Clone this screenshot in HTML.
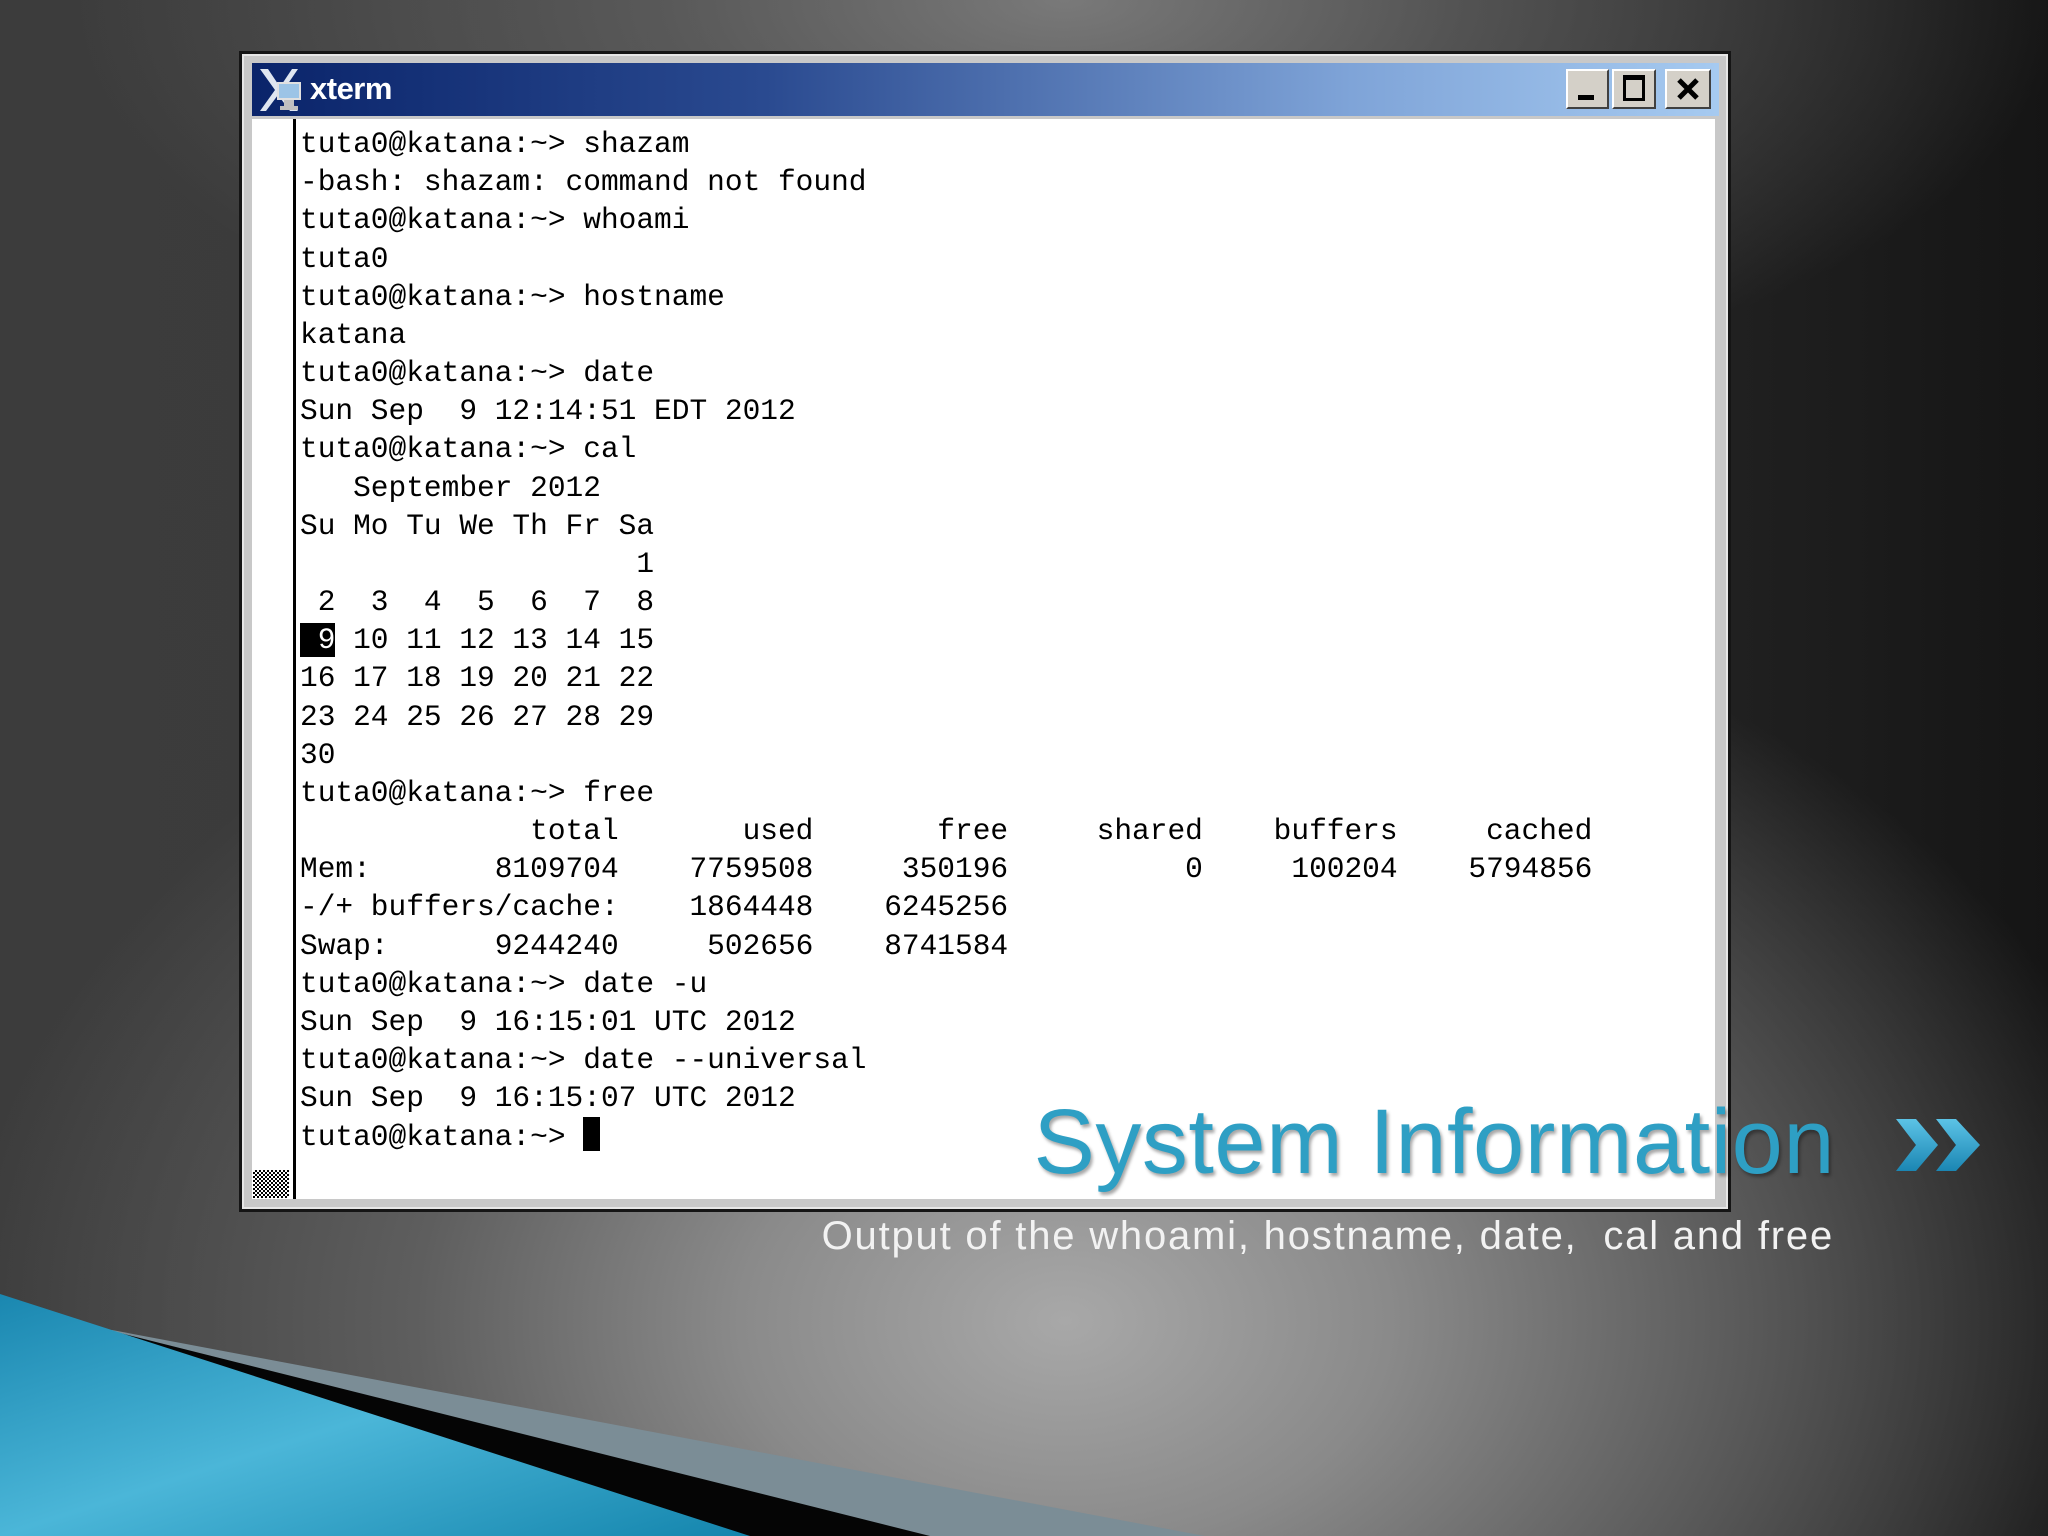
<!DOCTYPE html>
<html><head><meta charset="utf-8"><style>
*{margin:0;padding:0;box-sizing:border-box}
html,body{width:2048px;height:1536px;overflow:hidden}
body{position:relative;background:
radial-gradient(ellipse 1000px 420px at 52% 0%,rgba(125,125,125,.95) 0%,rgba(110,110,110,.6) 40%,rgba(80,80,80,0) 100%),
radial-gradient(ellipse 1300px 900px at 52% 86%,#a8a8a8 0%,#8a8a8a 25%,#5e5e5e 50%,rgba(60,60,60,0) 85%),
linear-gradient(90deg,#3c3c3c 0%,#3a3a3a 30%,#2e2e2e 65%,#151515 100%);font-family:"Liberation Sans",sans-serif}
#win{position:absolute;left:239px;top:51px;width:1492px;height:1161px;background:#c8c8c8;border:3px solid #151515;box-shadow:inset 0 0 0 2px #e6e6e6}
#tb{position:absolute;left:252px;top:63px;width:1467px;height:53px;background:linear-gradient(90deg,#0a246a 0%,#2a4a90 35%,#7fa4d8 75%,#a6caf0 100%)}
#tb .t{position:absolute;left:58px;top:8px;color:#fff;font-weight:bold;font-size:31px;letter-spacing:-0.5px}
.btn{position:absolute;top:6px;height:40px;background:#d4d0c8;border:2px solid;border-color:#fff #404040 #404040 #fff}
#cont{position:absolute;left:252px;top:119px;width:1463px;height:1080px;background:#fff}
#vl{position:absolute;left:293px;top:119px;width:3px;height:1080px;background:#000}
#chk{position:absolute;left:253px;top:1170px;width:36px;height:28px;background-image:repeating-conic-gradient(#000 0 25%,#fff 0 50%);background-size:4px 4px}
pre{position:absolute;left:300px;top:125px;font-family:"Liberation Mono",monospace;font-size:29.5px;line-height:38.17px;color:#000}
.inv{background:#000;color:#fff}
.cur{display:inline-block;width:17px;height:34px;background:#000;vertical-align:-6px}
#title{position:absolute;right:213px;top:1090px;font-size:92px;color:#2e9fc4;letter-spacing:0.5px;text-shadow:2px 3px 3px rgba(0,0,0,.35);white-space:nowrap}
#sub{position:absolute;right:214px;top:1214px;font-size:40px;color:#f2f2f2;letter-spacing:1.8px;white-space:nowrap}
</style></head><body>
<div id="win"></div>
<div id="tb">
<svg style="position:absolute;left:6px;top:4px" width="50" height="46" viewBox="0 0 50 46">
<path d="M2 2 L10 2 L22 20 L34 2 L40 2 L25 24 L40 44 L32 44 L20 28 L8 44 L2 44 L17 23 Z" fill="#dfe6f0"/>
<rect x="20" y="16" width="22" height="16" fill="#9cc4e6" stroke="#e0e0e0" stroke-width="2"/>
<rect x="26" y="33" width="10" height="6" fill="#c0c0c0"/><rect x="22" y="39" width="18" height="4" fill="#c0c0c0"/>
</svg>
<div class="t">xterm</div>
<div class="btn" style="left:1314px;width:43px"><div style="position:absolute;left:10px;top:24px;width:16px;height:5px;background:#000"></div></div>
<div class="btn" style="left:1360px;width:44px"><div style="position:absolute;left:9px;top:4px;width:22px;height:26px;border:3px solid #000;border-top-width:5px"></div></div>
<div class="btn" style="left:1413px;width:46px"><svg style="position:absolute;left:8px;top:5px" width="26" height="26" viewBox="0 0 26 26"><path d="M4 4 L22 22 M22 4 L4 22" stroke="#000" stroke-width="5"/></svg></div>
</div>
<div id="cont"></div>
<div id="vl"></div>
<div id="chk"></div>
<pre>tuta0@katana:~&gt; shazam
-bash: shazam: command not found
tuta0@katana:~&gt; whoami
tuta0
tuta0@katana:~&gt; hostname
katana
tuta0@katana:~&gt; date
Sun Sep  9 12:14:51 EDT 2012
tuta0@katana:~&gt; cal
   September 2012
Su Mo Tu We Th Fr Sa
                   1
 2  3  4  5  6  7  8
<span class="inv"> 9</span> 10 11 12 13 14 15
16 17 18 19 20 21 22
23 24 25 26 27 28 29
30
tuta0@katana:~&gt; free
             total       used       free     shared    buffers     cached
Mem:       8109704    7759508     350196          0     100204    5794856
-/+ buffers/cache:    1864448    6245256
Swap:      9244240     502656    8741584
tuta0@katana:~&gt; date -u
Sun Sep  9 16:15:01 UTC 2012
tuta0@katana:~&gt; date --universal
Sun Sep  9 16:15:07 UTC 2012
tuta0@katana:~&gt; <span class="cur"></span></pre>
<div id="title">System Information</div>
<svg style="position:absolute;left:1894px;top:1117px" width="92" height="56" viewBox="0 0 92 56">
<defs><linearGradient id="cg" x1="0" y1="0" x2="0" y2="1"><stop offset="0" stop-color="#5cc3e6"/><stop offset="1" stop-color="#1b86b3"/></linearGradient></defs>
<path d="M2 2 L22 2 L44 28 L22 54 L2 54 L22 28 Z" fill="url(#cg)"/>
<path d="M42 2 L62 2 L86 28 L62 54 L42 54 L62 28 Z" fill="url(#cg)"/>
</svg>
<div id="sub">Output of the whoami, hostname, date,&nbsp; cal and free</div>
<svg style="position:absolute;left:0;top:0" width="2048" height="1536" viewBox="0 0 2048 1536">
<defs><linearGradient id="bg2" x1="0" y1="0" x2="1" y2="1"><stop offset="0" stop-color="#1a87b0"/><stop offset="0.5" stop-color="#4bb6d8"/><stop offset="1" stop-color="#1485ad"/></linearGradient></defs>
<polygon points="112,1330 1205,1536 0,1536" fill="#7b8d96"/>
<polygon points="112,1331 930,1536 0,1536" fill="#050505"/>
<polygon points="0,1294 750,1536 0,1536" fill="url(#bg2)"/>
</svg>
</body></html>
